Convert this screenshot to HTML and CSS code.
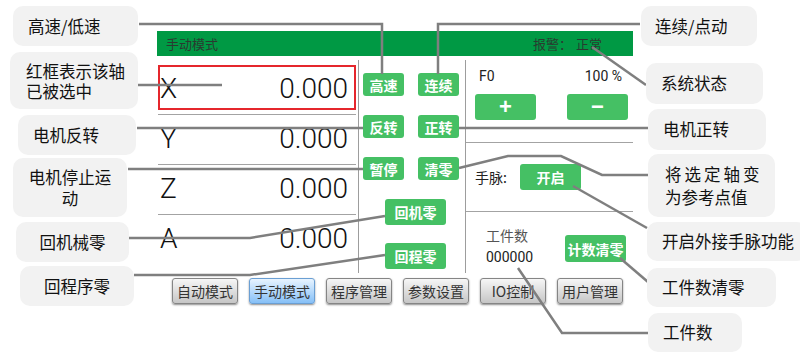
FILE: index.html
```html
<!DOCTYPE html>
<html lang="zh-CN">
<head>
    <meta charset="UTF-8">
    <meta name="viewport" content="width=device-width, initial-scale=1.0">
    <title>手动模式说明</title>
    <link rel="stylesheet" href="styles.css">
</head>
<body>
    <div class="canvas">
        <!-- HMI screen -->
        <div class="panel">
            <div class="panel-head">
                <span>手动模式</span>
                <span>报警：<span class="alarm">正常</span></span>
            </div>
            <div class="panel-body">
                <div class="axes">
                    <div class="axis-row"><div class="axis selected"><span>X</span><span>0.000</span></div></div>
                    <div class="axis-row"><div class="axis"><span>Y</span><span>0.000</span></div></div>
                    <div class="axis-row"><div class="axis"><span>Z</span><span>0.000</span></div></div>
                    <div class="axis-row"><div class="axis"><span>A</span><span>0.000</span></div></div>
                </div>
                <div class="keys">
                    <div class="key-row"><button class="key">高速</button><button class="key">连续</button></div>
                    <div class="key-row"><button class="key">反转</button><button class="key">正转</button></div>
                    <div class="key-row"><button class="key">暂停</button><button class="key">清零</button></div>
                    <button class="key key-wide">回机零</button>
                    <button class="key key-wide key-last">回程零</button>
                </div>
                <div class="feed">
                    <div class="feed-rate">
                        <div class="feed-top"><span>F0</span><span>100 %</span></div>
                        <div class="feed-btns">
                            <button class="key key-big key-sign">+</button>
                            <button class="key key-big key-sign">−</button>
                        </div>
                    </div>
                    <div class="handwheel">
                        <span class="hw-label">手脉:</span>
                        <button class="key key-big">开启</button>
                    </div>
                    <div class="counter">
                        <div class="count-info">
                            <div class="count-label">工件数</div>
                            <div class="count-value">000000</div>
                        </div>
                        <button class="key key-big count-reset">计数清零</button>
                    </div>
                </div>
            </div>
            <div class="nav">
                <button class="nav-btn">自动模式</button>
                <button class="nav-btn active">手动模式</button>
                <button class="nav-btn">程序管理</button>
                <button class="nav-btn">参数设置</button>
                <button class="nav-btn">IO控制</button>
                <button class="nav-btn">用户管理</button>
            </div>
        </div>

        <!-- leader lines -->
        <svg class="leaders" width="800" height="356" viewBox="0 0 800 356">
            <polyline points="139,24 382,24 382,74"/>
            <polyline points="640,24 438,24 438,74"/>
            <polyline points="136,85 222,85"/>
            <polyline points="137,128 363,128"/>
            <polyline points="128,169 363,169"/>
            <polyline points="129,238 250,238 385,216"/>
            <polyline points="134,275 250,275 385,255"/>
            <polyline points="592,47 646,85"/>
            <polyline points="459,128 648,128"/>
            <polyline points="459,168 508,156 561,156 602,175 648,175"/>
            <polyline points="573,186 647,228"/>
            <polyline points="620,258 648,282"/>
            <polyline points="518,268 562,333 648,333"/>
        </svg>

        <!-- callouts -->
        <div class="note n-speed"><span>高速/低速</span></div>
        <div class="note n-select"><span>红框表示该轴<br>已被选中</span></div>
        <div class="note n-reverse"><span>电机反转</span></div>
        <div class="note n-stop"><span>电机停止运<br>动</span></div>
        <div class="note n-home"><span>回机械零</span></div>
        <div class="note n-prog"><span>回程序零</span></div>
        <div class="note n-jog"><span>连续/点动</span></div>
        <div class="note n-status"><span>系统状态</span></div>
        <div class="note n-forward"><span>电机正转</span></div>
        <div class="note n-ref"><span><span class="wide">将选定轴变</span><br>为参考点值</span></div>
        <div class="note n-wheel"><span>开启外接手脉功能</span></div>
        <div class="note n-count-reset"><span>工件数清零</span></div>
        <div class="note n-count"><span>工件数</span></div>
    </div>
</body>
</html>
```

FILE: styles.css
```css
*, *::before, *::after {
    box-sizing: border-box;
}

body {
    margin: 0;
    background: #fff;
    font-family: "Noto Sans CJK SC", sans-serif;
    color: #222;
}

.canvas {
    position: relative;
    width: 800px;
    height: 356px;
    overflow: hidden;
}

/* HMI screen */
.panel {
    width: 476px;
    margin-left: 157px;
    padding-top: 31px;
}

.panel-head {
    height: 25px;
    background: #009944;
    color: #2a3a30;
    font-size: 13px;
    display: flex;
    justify-content: space-between;
    align-items: center;
    padding: 0 31px 0 9px;
}

.alarm {
    margin-left: 4px;
}

.panel-body {
    display: grid;
    grid-template-columns: 201px 108px 167px;
    height: 217px;
    padding-top: 4px;
}

.axes {
    padding: 5px 2px 0 1px;
}

.axis-row {
    height: 50px;
    border-bottom: 1px solid #a3a3a3;
}

.axis-row:last-child {
    border-bottom: none;
}

.axis {
    height: 45px;
    border: 2px solid transparent;
    display: flex;
    justify-content: space-between;
    align-items: center;
    padding: 2px 6px 0 0;
    font-family: Roboto, "Liberation Sans", sans-serif;
    font-weight: 300;
    font-size: 28px;
    color: #111;
}

.axis.selected {
    border-color: #e5262c;
}

.keys {
    border-left: 1px solid #9d9d9d;
    border-right: 1px solid #9d9d9d;
    padding: 13px 0 0 4px;
}

.key-row {
    display: flex;
    gap: 14px;
    margin-bottom: 19px;
}

.key {
    width: 41px;
    height: 23px;
    padding: 0;
    border: none;
    border-radius: 3px;
    background: #45c064;
    color: #fff;
    font-family: "Noto Sans CJK SC", sans-serif;
    font-weight: 700;
    font-size: 14px;
    line-height: 1;
}

.key-wide {
    display: block;
    width: 61px;
    height: 26px;
    margin-left: 22px;
}

.key-last {
    margin-top: 18px;
}

.key-big {
    width: 61px;
    height: 26px;
}

.key-sign {
    font-family: "Liberation Sans", sans-serif;
    font-size: 22px;
}

.feed-rate {
    height: 83px;
    border-bottom: 1px solid #a3a3a3;
    padding: 8px 5px 0 9px;
}

.feed-top {
    display: flex;
    justify-content: space-between;
    padding: 0 6px 0 4px;
    font-family: Roboto, "Liberation Sans", sans-serif;
    font-size: 14px;
    line-height: 16px;
}

.feed-btns {
    display: flex;
    justify-content: space-between;
    margin-top: 10px;
}

.handwheel {
    height: 69px;
    border-bottom: 1px solid #a3a3a3;
    display: flex;
    align-items: center;
    padding-left: 9px;
}

.hw-label {
    width: 45px;
    font-size: 14px;
}

.counter {
    display: flex;
    padding: 12px 7px 0 20px;
}

.count-info {
    line-height: 22px;
    font-size: 14px;
}

.count-label {
    color: #555;
}

.count-value {
    font-family: Roboto, "Liberation Sans", sans-serif;
}

.count-reset {
    margin-left: auto;
    margin-top: 11px;
    height: 27px;
}

.nav {
    display: flex;
    gap: 11px;
    padding-left: 15px;
    margin-top: 5px;
}

.nav-btn {
    width: 66px;
    height: 26px;
    padding: 0;
    border: 1px solid #858585;
    border-radius: 3px;
    background: linear-gradient(#f6f6f6, #c6c6c6);
    box-shadow: 0 1px 2px rgba(0, 0, 0, 0.45);
    color: #333;
    font-family: "Noto Sans CJK SC", sans-serif;
    font-size: 14px;
}

.nav-btn.active {
    border-color: #6b9fd3;
    background: linear-gradient(#e8f4ff, #86c0f7);
}

/* leader lines */
.leaders {
    position: absolute;
    left: 0;
    top: 0;
}

.leaders polyline {
    fill: none;
    stroke: #7f7f7f;
    stroke-width: 2.5;
}

/* callouts */
.note {
    position: absolute;
    display: flex;
    align-items: center;
    padding: 0 15px;
    background: #f2f2f2;
    border-radius: 10px;
    font-size: 16.5px;
    line-height: 21px;
    color: #111;
    white-space: nowrap;
}

.note.n-stop, .note.n-home, .note.n-prog {
    justify-content: center;
    text-align: center;
    padding: 0;
}

.n-speed { left: 13px; top: 6px; width: 125px; height: 40px; }
.n-select { left: 10px; top: 52px; width: 128px; height: 57px; padding-left: 16px; line-height: 20px; }
.n-reverse { left: 18px; top: 115px; width: 118px; height: 40px; }
.n-stop { left: 13px; top: 158px; width: 114px; height: 59px; }
.n-home { left: 16px; top: 222px; width: 113px; height: 40px; }
.n-prog { left: 20px; top: 266px; width: 114px; height: 40px; }
.n-jog { left: 641px; top: 6px; width: 116px; height: 40px; padding-left: 14px; }
.n-status { left: 646px; top: 63px; width: 117px; height: 41px; }
.n-forward { left: 648px; top: 109px; width: 118px; height: 41px; }
.n-ref { left: 648px; top: 154px; width: 127px; height: 63px; padding-left: 17px; line-height: 23px; }
.n-wheel { left: 647px; top: 222px; width: 160px; height: 39px; }
.n-count-reset { left: 647px; top: 268px; width: 129px; height: 39px; }
.n-count { left: 648px; top: 313px; width: 94px; height: 39px; }

.wide {
    letter-spacing: 3px;
}
```
